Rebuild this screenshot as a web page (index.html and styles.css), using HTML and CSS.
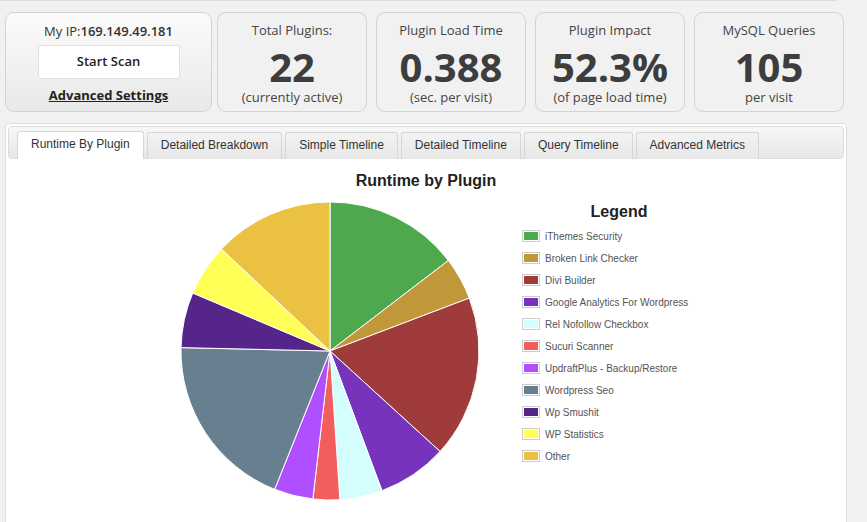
FILE: index.html
```html
<!DOCTYPE html>
<html>
<head>
<meta charset="utf-8">
<link rel="stylesheet" href="styles.css">
</head>
<body>
<div class="topline"></div>
<div class="cards">
  <div class="card card-ip">
    <div class="ip">My IP:<b>169.149.49.181</b></div>
    <div class="btn">Start Scan</div>
    <a class="adv">Advanced Settings</a>
  </div>
  <div class="card stat">
    <div class="stat-title">Total Plugins:</div>
    <div class="stat-num">22</div>
    <div class="stat-sub">(currently active)</div>
  </div>
  <div class="card stat">
    <div class="stat-title">Plugin Load Time</div>
    <div class="stat-num">0.388</div>
    <div class="stat-sub">(sec. per visit)</div>
  </div>
  <div class="card stat">
    <div class="stat-title">Plugin Impact</div>
    <div class="stat-num">52.3%</div>
    <div class="stat-sub">(of page load time)</div>
  </div>
  <div class="card stat">
    <div class="stat-title">MySQL Queries</div>
    <div class="stat-num">105</div>
    <div class="stat-sub">per visit</div>
  </div>
</div>

<div class="panel">
  <div class="nav">
    <div class="tab active">Runtime By Plugin</div>
    <div class="tab">Detailed Breakdown</div>
    <div class="tab">Simple Timeline</div>
    <div class="tab">Detailed Timeline</div>
    <div class="tab">Query Timeline</div>
    <div class="tab">Advanced Metrics</div>
  </div>
  <div class="content">
    <h3 class="chart-title">Runtime by Plugin</h3>
    <div class="chart-row">
      <svg class="pie" width="300" height="300" viewBox="0 0 300 300">
        <g stroke="#fff" stroke-width="1" stroke-linejoin="round">
          <path fill="#4ea84e" d="M150 150 L150 1 A149 149 0 0 1 268.37 59.50 Z"/>
          <path fill="#c0983a" d="M150 150 L268.37 59.50 A149 149 0 0 1 289.29 97.09 Z"/>
          <path fill="#a03b3c" d="M150 150 L289.29 97.09 A149 149 0 0 1 260.04 250.47 Z"/>
          <path fill="#7733bb" d="M150 150 L260.04 250.47 A149 149 0 0 1 201.94 289.66 Z"/>
          <path fill="#d4fefe" d="M150 150 L201.94 289.66 A149 149 0 0 1 159.88 298.67 Z"/>
          <path fill="#f25d5d" d="M150 150 L159.88 298.67 A149 149 0 0 1 132.88 298.02 Z"/>
          <path fill="#b04fff" d="M150 150 L132.88 298.02 A149 149 0 0 1 94.66 288.35 Z"/>
          <path fill="#687f8f" d="M150 150 L94.66 288.35 A149 149 0 0 1 1.04 146.62 Z"/>
          <path fill="#55258a" d="M150 150 L1.04 146.62 A149 149 0 0 1 12.74 92.02 Z"/>
          <path fill="#ffff57" d="M150 150 L12.74 92.02 A149 149 0 0 1 41.38 48.01 Z"/>
          <path fill="#ebc142" d="M150 150 L41.38 48.01 A149 149 0 0 1 150 1 Z"/>
        </g>
      </svg>
      <div class="legend">
        <div class="legend-title">Legend</div>
        <div class="li"><span class="sw"><i class="c1"></i></span>iThemes Security</div>
        <div class="li"><span class="sw"><i class="c2"></i></span>Broken Link Checker</div>
        <div class="li"><span class="sw"><i class="c3"></i></span>Divi Builder</div>
        <div class="li"><span class="sw"><i class="c4"></i></span>Google Analytics For Wordpress</div>
        <div class="li"><span class="sw"><i class="c5"></i></span>Rel Nofollow Checkbox</div>
        <div class="li"><span class="sw"><i class="c6"></i></span>Sucuri Scanner</div>
        <div class="li"><span class="sw"><i class="c7"></i></span>UpdraftPlus - Backup/Restore</div>
        <div class="li"><span class="sw"><i class="c8"></i></span>Wordpress Seo</div>
        <div class="li"><span class="sw"><i class="c9"></i></span>Wp Smushit</div>
        <div class="li"><span class="sw"><i class="c10"></i></span>WP Statistics</div>
        <div class="li"><span class="sw"><i class="c11"></i></span>Other</div>
      </div>
    </div>
  </div>
</div>
</body>
</html>
```
FILE: styles.css
```css
* { box-sizing: border-box; }
html, body { margin: 0; padding: 0; }
body {
  background: #f1f1f1;
  font-family: "Open Sans", "Liberation Sans", sans-serif;
  color: #444;
  width: 867px;
  height: 522px;
  overflow: hidden;
}
.topline {
  width: 837px;
  height: 1px;
  background: #dcdcdc;
}
.cards {
  display: flex;
  margin-top: 11px;
  padding-left: 5px;
  gap: 9px;
}
.card {
  height: 100px;
  border: 1px solid #d3d3d3;
  border-radius: 9px;
  text-align: center;
}
.card-ip {
  width: 207px;
  margin-right: -4px;
  background: linear-gradient(#fbfbfb, #e9e9e9);
  padding-top: 9px;
  display: flex;
  flex-direction: column;
  align-items: center;
  color: #333;
}
.ip {
  font-size: 13px;
  line-height: 18px;
}
.ip b { font-weight: 600; }
.btn {
  margin-top: 5px;
  width: 142px;
  height: 34px;
  background: #fff;
  border: 1px solid #e0e0e0;
  border-radius: 3px;
  font-size: 13px;
  font-weight: 600;
  line-height: 31px;
  color: #222;
}
.adv {
  margin-top: 7px;
  font-size: 13px;
  font-weight: 700;
  line-height: 18px;
  text-decoration: underline;
  color: #222;
}
.stat {
  width: 150px;
  padding-top: 8px;
  background: #f1f1f1;
}
.stat-title {
  font-size: 13px;
  line-height: 18px;
  color: #444;
}
.stat-num {
  margin-top: 8px;
  margin-bottom: 1px;
  font-size: 40px;
  font-weight: 700;
  line-height: 40px;
  color: #3d3d3d;
}
.stat-sub {
  font-size: 13px;
  line-height: 18px;
  color: #444;
}
.panel {
  margin: 11px 0 0 5px;
  width: 842px;
  height: 420px;
  background: #fff;
  border: 1px solid #dedede;
  border-radius: 4px;
  padding: 2px;
}
.nav {
  height: 33px;
  border: 1px solid #dcdcdc;
  border-radius: 4px;
  background: linear-gradient(#f7f7f7, #e8e8e8);
  display: flex;
  align-items: flex-end;
  padding-left: 8px;
  gap: 3px;
}
.tab {
  height: 27px;
  margin-bottom: -1px;
  padding: 0 13px;
  border: 1px solid #d6d6d6;
  border-bottom: none;
  border-radius: 3px 3px 0 0;
  background: linear-gradient(#f3f3f3, #e7e7e7);
  font-family: "Liberation Sans", Arial, sans-serif;
  font-size: 12px;
  line-height: 25px;
  color: #333;
}
.tab.active {
  background: #fff;
  height: 28px;
}
.content {
  background: #fff;
}
.chart-title {
  margin: 0;
  padding-top: 12px;
  font-family: "Liberation Sans", Arial, sans-serif;
  font-size: 16px;
  font-weight: 700;
  line-height: 20px;
  text-align: center;
  color: #222;
}
.chart-row {
  display: flex;
  margin-top: 10px;
  padding-left: 172px;
}
.pie { display: block; }
.legend {
  margin-left: 42px;
  margin-top: 2px;
  width: 194px;
  font-family: "Liberation Sans", Arial, sans-serif;
}
.legend-title {
  font-size: 16px;
  font-weight: 700;
  line-height: 18px;
  text-align: center;
  color: #222;
  margin-bottom: 4px;
}
.li {
  display: flex;
  align-items: center;
  height: 22px;
  font-size: 10px;
  color: #545454;
}
.sw {
  display: inline-block;
  width: 18px;
  height: 12px;
  border: 1px solid #ccc;
  padding: 1px;
  margin-right: 5px;
  background: #fff;
}
.sw i { display: block; width: 14px; height: 8px; }
.c1 { background: #4ea84e; }
.c2 { background: #c0983a; }
.c3 { background: #a03b3c; }
.c4 { background: #7733bb; }
.c5 { background: #d4fefe; }
.c6 { background: #f25d5d; }
.c7 { background: #b04fff; }
.c8 { background: #687f8f; }
.c9 { background: #55258a; }
.c10 { background: #ffff57; }
.c11 { background: #ebc142; }
```
